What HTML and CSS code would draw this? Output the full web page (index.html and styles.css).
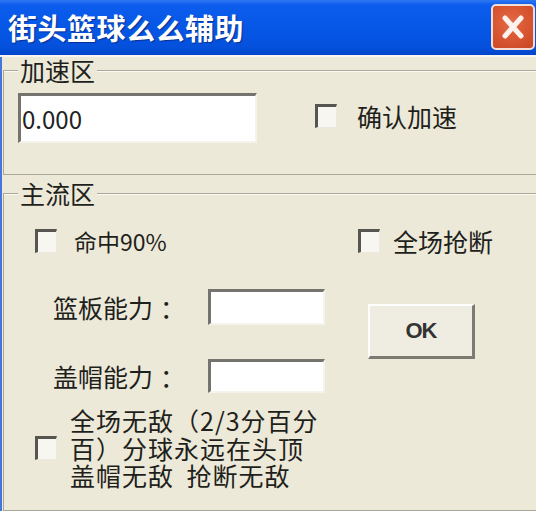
FILE: index.html
```html
<!DOCTYPE html>
<html lang="zh-CN">
<head>
<meta charset="utf-8">
<title>街头篮球么么辅助</title>
<link rel="stylesheet" href="styles.css">
</head>
<body>
<div class="window">
  <div class="titlebar">
    <span class="title">街头篮球么么辅助</span>
    <span class="close"><svg class="close-x" viewBox="0 0 40 42" width="40" height="42"><path d="M12 12 L28 30 M28 12 L12 30" stroke="#fdf2ee" stroke-width="5" stroke-linecap="round"/></svg></span>
  </div>
  <div class="client">
    <fieldset class="group g1">
      <legend>加速区</legend>
      <div class="row1">
        <div class="edit big">0.000</div>
        <label class="check c-confirm"><span class="box"></span><span class="ctext">确认加速</span></label>
      </div>
    </fieldset>
    <fieldset class="group g2">
      <legend>主流区</legend>
      <div class="grid">
        <div class="left">
          <label class="check c-hit"><span class="box"></span><span class="ctext">命中90%</span></label>
          <div class="field r-b"><span class="flabel">篮板能力<span class="colon">：</span></span><span class="edit small"></span></div>
          <div class="field r-c"><span class="flabel">盖帽能力<span class="colon">：</span></span><span class="edit small short"></span></div>
          <label class="check multi"><span class="box"></span><span class="mtext">全场无敌（2/3分百分<br>百）分球永远在头顶<br>盖帽无敌 抢断无敌</span></label>
        </div>
        <div class="right">
          <label class="check c-steal"><span class="box"></span><span class="ctext">全场抢断</span></label>
          <button class="ok" type="button">OK</button>
        </div>
      </div>
    </fieldset>
  </div>
</div>
</body>
</html>
```
FILE: styles.css
```css
* { box-sizing: border-box; }
html, body { margin: 0; padding: 0; }
body {
  width: 536px;
  height: 511px;
  overflow: hidden;
  background: #ECE9D8;
  font-family: "Noto Sans CJK SC", sans-serif;
  color: #1f1f1c;
}
.window {
  width: 536px;
  height: 511px;
  display: flex;
  flex-direction: column;
  background: #ECE9D8;
  border-left: 2px solid #4476df;
}
.titlebar {
  height: 57px;
  flex: none;
  display: flex;
  align-items: flex-start;
  justify-content: space-between;
  background: linear-gradient(#2f78f2 0px, #0c5ced 5px, #0656e6 30px, #0450db 48px, #0345c9 55px, #f6f5ef 55px, #f6f5ef 57px);
  margin-left: -2px;
  padding-left: 8px;
}
.title {
  height: 55px;
  display: flex;
  align-items: center;
  color: #fff;
  font-size: 29px;
  font-weight: 700;
  line-height: 1;
  letter-spacing: 0.5px;
  text-shadow: 1px 1px 1px #0b2f8f;
}
.close {
  width: 44px;
  height: 46px;
  margin-top: 4px;
  margin-right: 1px;
  border: 2px solid #f3ddd4;
  border-radius: 5px;
  background: radial-gradient(circle at 45% 40%, #e46a45 0%, #d6532f 60%, #c94626 100%);
  display: flex;
  align-items: center;
  justify-content: center;
}
.client {
  flex: 1;
  padding-left: 1px;
}
.group {
  margin: 0;
  padding: 0;
  min-width: 0;
  border: 1px solid #aba898;
  border-right: none;
  box-shadow: inset 0 1px 0 #fbfaf6;
}
.group legend {
  margin-left: 14px;
  padding: 0 2px;
  font-size: 25px;
  line-height: 26px;
  height: 26px;
  background: #ECE9D8;
}
.g2 { margin-top: 5px; }
.row1 {
  display: flex;
  align-items: center;
  padding: 10px 0 31px 14px;
}
.edit {
  display: block;
  background: #fff;
  border-top: 3px solid #74736d;
  border-left: 3px solid #74736d;
  border-right: 2px solid #f4f3ec;
  border-bottom: 2px solid #f4f3ec;
}
.edit.big {
  width: 239px;
  height: 50px;
  font-size: 24px;
  line-height: 45px;
  padding-left: 1px;
  color: #222;
}
.check {
  display: flex;
  align-items: center;
  gap: 16px;
  font-size: 25px;
  line-height: 26px;
}
.box {
  flex: none;
  width: 22px;
  height: 24px;
  background: #f7f6f1;
  border-top: 3px solid #565550;
  border-left: 3px solid #565550;
  border-right: 1px solid #eceae0;
  border-bottom: 1px solid #eceae0;
}
.c-confirm { margin-left: 58px; gap: 20px; margin-bottom: 5px; }
.c-hit { gap: 17px; font-size: 23px; }
.c-steal { gap: 13px; }
.grid {
  display: grid;
  grid-template-columns: 323px auto;
  padding: 22px 0 20px 31px;
}
.left { display: flex; flex-direction: column; align-items: flex-start; }
.field {
  display: flex;
  align-items: center;
  margin-left: 18px;
  font-size: 25px;
  line-height: 26px;
}
.r-b { margin-top: 35px; }
.r-c { margin-top: 34px; }
.flabel { width: 155px; white-space: nowrap; }
.colon { margin-left: 7px; }
.edit.small { width: 117px; height: 36px; }
.edit.short { height: 34px; }
.multi { margin-top: 14px; gap: 13px; }
.mtext { font-size: 25px; line-height: 27.5px; letter-spacing: 1px; word-spacing: 6px; }
.right { display: flex; flex-direction: column; align-items: flex-start; }
.ok {
  margin-top: 50px;
  margin-left: 10px;
  width: 107px;
  height: 55px;
  padding: 0;
  background: #efede2;
  border-top: 2px solid #fdfdfb;
  border-left: 2px solid #fdfdfb;
  border-right: 3px solid #7c7b72;
  border-bottom: 3px solid #7c7b72;
  font-family: "Liberation Sans", sans-serif;
  font-size: 22px;
  font-weight: 700;
  color: #333;
  letter-spacing: -1px;
}
```
